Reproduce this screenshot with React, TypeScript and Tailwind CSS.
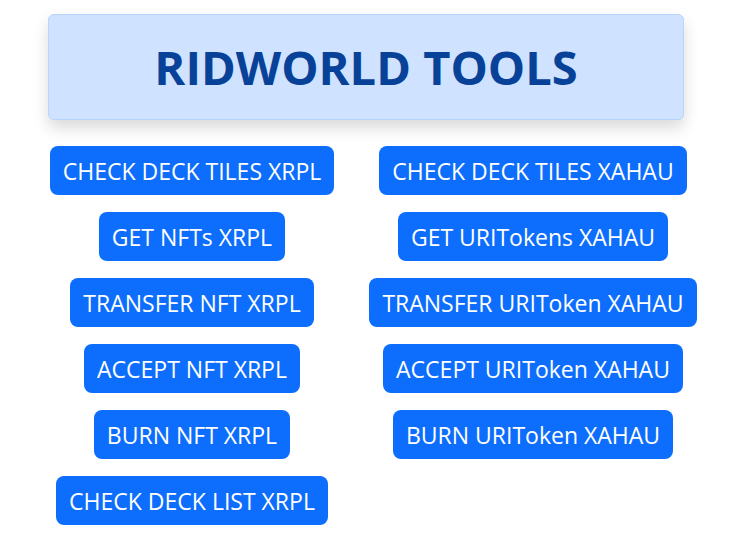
import React from 'react';

const xrplTools = [
  'CHECK DECK TILES XRPL',
  'GET NFTs XRPL',
  'TRANSFER NFT XRPL',
  'ACCEPT NFT XRPL',
  'BURN NFT XRPL',
  'CHECK DECK LIST XRPL',
];

const xahauTools = [
  'CHECK DECK TILES XAHAU',
  'GET URITokens XAHAU',
  'TRANSFER URIToken XAHAU',
  'ACCEPT URIToken XAHAU',
  'BURN URIToken XAHAU',
];

const ToolButton: React.FC<{ label: string }> = ({ label }) => (
  <button className="h-[49px] px-[13px] mb-[17px] rounded-lg bg-[#0d6efd] text-white text-[23px] leading-[30px] whitespace-nowrap flex items-center">
    {label}
  </button>
);

const App: React.FC = () => {
  return (
    <div
      className="w-[732px] min-h-[555px] bg-white pt-[14px]"
      style={{ fontFamily: '"Open Sans", "Noto Sans", sans-serif' }}
    >
      {/* Header */}
      <div className="ml-[48px] w-[636px] h-[106px] rounded-md border border-[#b6d4fe] bg-[#cfe2ff] shadow-[0_8px_16px_rgba(0,0,0,0.15)] flex items-center justify-center">
        <h1 className="text-[47px] font-bold text-[#084298] leading-none">RIDWORLD TOOLS</h1>
      </div>

      {/* Tool buttons */}
      <div className="flex pl-[50px] gap-[35px] mt-[26px]">
        <div className="w-[284px] flex flex-col items-center">
          {xrplTools.map((t) => (
            <ToolButton key={t} label={t} />
          ))}
        </div>
        <div className="w-[328px] flex flex-col items-center">
          {xahauTools.map((t) => (
            <ToolButton key={t} label={t} />
          ))}
        </div>
      </div>
    </div>
  );
};

export default App;
